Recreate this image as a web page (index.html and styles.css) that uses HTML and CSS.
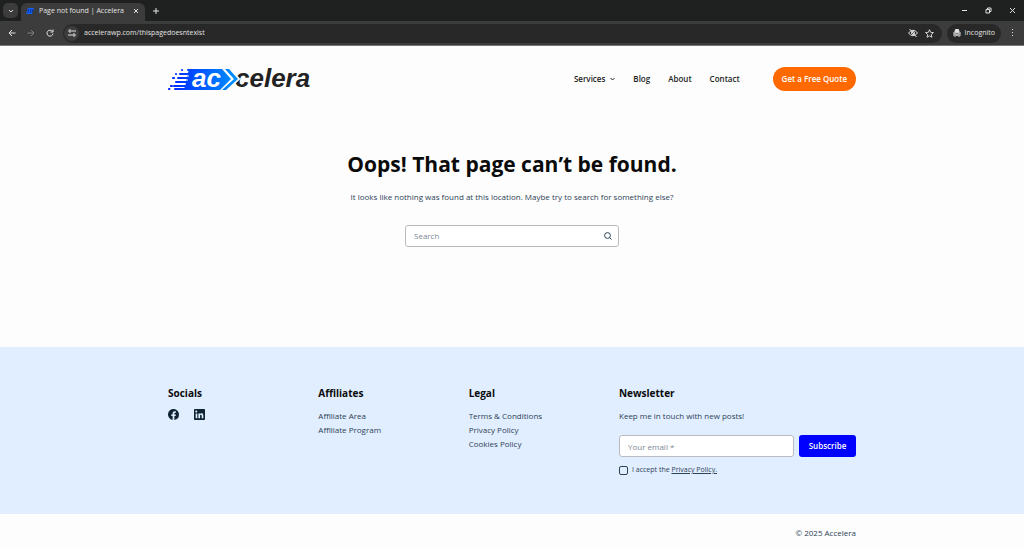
FILE: index.html
```html
<!DOCTYPE html>
<html lang="en">
<head>
    <meta charset="UTF-8">
    <title>Page not found | Accelera</title>
    <link rel="stylesheet" href="styles.css">
</head>
<body>
    <!-- browser -->
    <div class="browser">
        <div class="tabs">
            <button class="tab-list" aria-label="Search tabs">
                <svg width="6" height="6" viewBox="0 0 6 6"><path d="M1 2l2 2 2-2"/></svg>
            </button>
            <div class="tab">
                <svg class="favicon" width="8" height="6" viewBox="0 0 8 6"><path d="M2 0h6L6 6H0z" fill="#1463ff"/><path d="M3 1L1.500 5M5 1L4 5M7 1L6 5" stroke="#10308c"/></svg>
                <span class="tab-title">Page not found | Accelera</span>
                <button class="icon" aria-label="Close tab">
                    <svg width="6" height="6" viewBox="0 0 6 6"><path d="M1 1l4 4M5 1L1 5"/></svg>
                </button>
            </div>
            <button class="icon new-tab" aria-label="New tab">
                <svg width="8" height="8" viewBox="0 0 8 8"><path d="M4 1v6M1 4h6"/></svg>
            </button>
            <div class="window-btns">
                <button class="icon" aria-label="Minimize"><svg width="7" height="7" viewBox="0 0 7 7"><path d="M1 3.500h5"/></svg></button>
                <button class="icon" aria-label="Restore"><svg width="7" height="7" viewBox="0 0 7 7"><path d="M1 2.500h3.500V6H1zM2.500 2.500V1H6v3.500H4.500"/></svg></button>
                <button class="icon" aria-label="Close"><svg width="7" height="7" viewBox="0 0 7 7"><path d="M1 1l5 5M6 1L1 6"/></svg></button>
            </div>
        </div>
        <div class="toolbar">
            <button class="icon" aria-label="Back"><svg width="8" height="8" viewBox="0 0 8 8"><path d="M7.500 4H1M4 1L1 4l3 3"/></svg></button>
            <button class="icon off" aria-label="Forward"><svg width="8" height="8" viewBox="0 0 8 8"><path d="M.5 4H7M4 1l3 3-3 3"/></svg></button>
            <button class="icon" aria-label="Reload"><svg width="8" height="8" viewBox="0 0 8 8"><path d="M6.500 2.500A3 3 0 1 0 7 4.500M7 .5v2.500H4.500"/></svg></button>
            <div class="address">
                <button class="site-info" aria-label="Site information"><svg width="8" height="8" viewBox="0 0 8 8"><path d="M4 2h4M0 6h4"/><circle cx="2" cy="2" r="1.200"/><circle cx="6" cy="6" r="1.200"/></svg></button>
                <input class="url" type="text" aria-label="Address" value="accelerawp.com/thispagedoesntexist">
                <button class="icon" aria-label="Tracking protection"><svg width="10" height="10" viewBox="0 0 10 10"><path d="M.5 5Q5-.5 9.500 5 5 10.500.5 5zM1.500 1l7 8"/><circle cx="5" cy="5" r="1.500"/></svg></button>
                <button class="icon" aria-label="Bookmark"><svg width="9" height="9" viewBox="0 0 10 10"><path d="M5 .8l1.300 2.900 3.100.3L7 6.100l.7 3.100L5 7.600 2.300 9.200 3 6.100.6 4l3.100-.3z"/></svg></button>
            </div>
            <button class="incognito">
                <svg width="8" height="8" viewBox="0 0 8 8"><path d="M2.500.5h3l.7 2.700h-4.400z" fill="#e3e3e3"/><path d="M0 4h8M3 6h2"/><circle cx="2" cy="6" r="1.200"/><circle cx="6" cy="6" r="1.200"/></svg>
                Incognito
            </button>
            <button class="icon" aria-label="Menu"><svg class="dots" width="4" height="8" viewBox="0 0 4 8"><path d="M1 0h1v1H1zM1 3h1v1H1zM1 6h1v1H1z"/></svg></button>
        </div>
    </div>

    <header class="container header">
        <a href="#" class="logo" aria-label="Accelera">
            <svg width="146" height="34" viewBox="0 -4 146 34">
                <defs>
                    <linearGradient id="blue" gradientUnits="userSpaceOnUse" x1="0" y1="0" x2="70" y2="0">
                        <stop offset="0" stop-color="#0020ff"/>
                        <stop offset=".4" stop-color="#0050ff"/>
                        <stop offset="1" stop-color="#0094ff"/>
                    </linearGradient>
                </defs>
                <text x="67" y="21" class="logo-dark">celera</text>
                <path d="M54 3h8l9 10-12 11h-8z" fill="#fdfdfd" stroke="#fdfdfd" stroke-width="2"/>
                <path d="M21 3h33l9 10-11 11H16l2-9z" fill="url(#blue)"/>
                <path d="M57 3h4l9 10-12 11h-4l12-11z" fill="url(#blue)"/>
                <g stroke="url(#blue)" stroke-width="2" stroke-linecap="round">
                    <path d="M20 4h5M12 8.100l12-.1M10 12.100l12-.1M8 16.100l12-.1M6 20.100l12-.1M7 23.100l12-.1"/>
                    <path d="M14 4l.1.100M8 8l.1.100M5 12l1 .1M4 20l-1 .1M1 23l.5.100"/>
                </g>
                <path d="M13 10h8M11 14h9M10 18h8" stroke="#fdfdfd"/>
                <text x="24" y="21" class="logo-light">ac</text>
            </svg>
        </a>
        <nav class="nav">
            <a href="#">Services <svg width="5" height="4" viewBox="0 0 5 4"><path d="M.5 1l2 2 2-2"/></svg></a>
            <a href="#">Blog</a>
            <a href="#">About</a>
            <a href="#">Contact</a>
        </nav>
        <a href="#" class="quote">Get a Free Quote</a>
    </header>

    <main class="not-found">
        <h1>Oops! That page can’t be found.</h1>
        <p>It looks like nothing was found at this location. Maybe try to search for something else?</p>
        <form class="search">
            <input type="search" placeholder="Search" aria-label="Search">
            <button aria-label="Search"><svg width="8" height="8" viewBox="0 0 8 8"><circle cx="3.500" cy="3.500" r="2.900"/><path d="M5.500 5.500l2 2"/></svg></button>
        </form>
    </main>

    <footer>
        <div class="widgets">
            <div class="container columns">
                <section>
                    <h2>Socials</h2>
                    <div class="socials">
                        <a href="#" aria-label="Facebook"><svg width="11" height="11" viewBox="0 0 20 20"><path d="M20 10A10 10 0 1 0 8.400 19.900v-7H5.900V10h2.500V7.800c0-2.500 1.500-3.900 3.800-3.900l2.200.2v2.500h-1.200c-1.300 0-1.600.8-1.600 1.600V10h2.700l-.4 2.900h-2.300v7A10 10 0 0 0 20 10z"/></svg></a>
                        <a href="#" aria-label="LinkedIn"><svg width="11" height="11" viewBox="0 0 20 20"><path d="M18.500 0h-17A1.500 1.500 0 0 0 0 1.500v17A1.500 1.500 0 0 0 1.500 20h17a1.500 1.500 0 0 0 1.500-1.500v-17A1.500 1.500 0 0 0 18.500 0zM6 17H3V8h3zM4.500 6.300a1.800 1.800 0 1 1 0-3.500 1.800 1.800 0 0 1 0 3.500zM17 17h-3v-4.700c0-1.400-.6-1.900-1.400-1.900s-1.600.6-1.600 2V17H8V8h2.900v1.300c.3-.6 1.300-1.600 2.900-1.600 1.700 0 3.200 1 3.200 4z"/></svg></a>
                    </div>
                </section>
                <section>
                    <h2>Affiliates</h2>
                    <ul>
                        <li><a href="#">Affiliate Area</a></li>
                        <li><a href="#">Affiliate Program</a></li>
                    </ul>
                </section>
                <section>
                    <h2>Legal</h2>
                    <ul>
                        <li><a href="#">Terms &amp; Conditions</a></li>
                        <li><a href="#">Privacy Policy</a></li>
                        <li><a href="#">Cookies Policy</a></li>
                    </ul>
                </section>
                <section>
                    <h2>Newsletter</h2>
                    <p>Keep me in touch with new posts!</p>
                    <form>
                        <div class="subscribe">
                            <input type="email" placeholder="Your email *" aria-label="Your email">
                            <button>Subscribe</button>
                        </div>
                        <div class="accept">
                            <input type="checkbox" id="accept">
                            <label for="accept">I accept the <a href="#">Privacy Policy.</a></label>
                        </div>
                    </form>
                </section>
            </div>
        </div>
        <div class="container copyright">© 2025 Accelera</div>
    </footer>
</body>
</html>
```
FILE: styles.css
```css
*{
    box-sizing: border-box;
}
body{
    margin: 0;
    font: 8px/14px "Open Sans", "Noto Sans", sans-serif;
    color: #2c4256;
    background-color: #fdfdfd;
}
h1,h2,p,ul{
    margin: 0;
    padding: 0;
}
ul{
    list-style-type: none;
}
a{
    text-decoration: none;
    color: inherit;
}
button,input{
    margin: 0;
    padding: 0;
    border: none;
    background: none;
    font: inherit;
    color: inherit;
    outline: none;
}
svg{
    display: block;
}
.container{
    max-width: 688px;
    margin: 0 auto;
}

/* browser */
.browser{
    background-color: #3c3c3c;
    color: #e3e3e3;
    font: 7px/12px "Open Sans", sans-serif;
    border-bottom: 1px solid #777777;
}
.browser svg{
    fill: none;
    stroke: #e3e3e3;
}
.browser .favicon{
    stroke: none;
}
.browser .dots{
    fill: #e3e3e3;
    stroke: none;
}
.tabs{
    display: flex;
    align-items: center;
    height: 21px;
    padding: 0 6px 0 3px;
    background-color: #1f2120;
}
.icon{
    display: flex;
    align-items: center;
    justify-content: center;
    width: 12px;
    height: 12px;
}
.off{
    opacity: .4;
}
.tab-list{
    display: flex;
    align-items: center;
    justify-content: center;
    width: 15px;
    height: 15px;
    border-radius: 5px;
    background-color: #3c3c3c;
}
.tab{
    display: flex;
    align-items: center;
    gap: 5px;
    width: 124px;
    height: 18px;
    margin: 3px 5px 0 3px;
    padding: 0 3px 2px 5px;
    border-radius: 6px 6px 0 0;
    background-color: #3c3c3c;
}
.tab-title{
    flex: 1;
    white-space: nowrap;
}
.window-btns{
    display: flex;
    gap: 12px;
    margin-left: auto;
}
.toolbar{
    display: flex;
    align-items: center;
    gap: 7px;
    height: 24px;
    padding: 0 5px 0 6px;
}
.address{
    display: flex;
    align-items: center;
    gap: 5px;
    flex: 1;
    height: 19px;
    margin-right: -2px;
    padding: 0 6px 0 1px;
    border-radius: 10px;
    background-color: #282828;
}
.site-info{
    display: flex;
    align-items: center;
    justify-content: center;
    width: 15px;
    height: 15px;
    border-radius: 50%;
    background-color: #3c3c3c;
}
.url{
    flex: 1;
}
.incognito{
    display: flex;
    align-items: center;
    gap: 4px;
    height: 19px;
    margin-right: -1px;
    padding: 0 6px;
    border-radius: 10px;
    background-color: #282828;
}

/* header */
.header{
    display: flex;
    align-items: center;
    height: 66px;
}
.logo-dark,.logo-light{
    font: italic bold 26px "Liberation Sans", sans-serif;
    fill: #222222;
}
.logo-light{
    fill: #ffffff;
}
.nav{
    display: flex;
    gap: 18px;
    margin-left: auto;
    font-weight: 600;
    color: #222222;
}
.nav a{
    display: flex;
    align-items: center;
    gap: 5px;
}
.nav svg{
    fill: none;
    stroke: #222222;
}
.quote{
    margin-left: 33px;
    padding: 5px 9px;
    border-radius: 12px;
    background-color: #ff6900;
    font-weight: 600;
    color: #ffffff;
}

/* 404 */
.not-found{
    display: flex;
    flex-direction: column;
    align-items: center;
    min-height: 235px;
    padding-top: 36px;
}
.not-found h1{
    font-size: 21px;
    line-height: 32px;
    color: #0a0a0a;
}
.not-found p{
    margin: 10px 0 21px;
}
.search{
    display: flex;
    align-items: center;
    width: 214px;
    height: 22px;
    padding: 0 6px 0 8px;
    border: 1px solid #b8bcc0;
    border-radius: 3px;
    background-color: #ffffff;
}
.search input{
    flex: 1;
}
.search svg{
    fill: none;
    stroke: #2c4256;
}
::placeholder{
    color: #7b8794;
    opacity: 1;
}

/* footer */
.widgets{
    padding: 39px 0 37px;
    background-color: #e1eeff;
}
.columns{
    display: grid;
    grid-template-columns: 1fr 1fr 1fr 237px;
}
.columns h2{
    margin-bottom: 9px;
    font-size: 10px;
    line-height: 14px;
    color: #0a0a0a;
}
.socials{
    display: flex;
    gap: 15px;
    fill: #0e2333;
}
.subscribe{
    display: flex;
    gap: 5px;
    margin: 12px 0 6px;
}
.subscribe input{
    flex: 1;
    min-width: 0;
    height: 22px;
    padding: 0 8px;
    border: 1px solid #b8bcc0;
    border-radius: 3px;
    background-color: #ffffff;
}
.subscribe button{
    width: 57px;
    border-radius: 3px;
    background-color: #0000ff;
    font-weight: 600;
    color: #ffffff;
}
.accept{
    display: flex;
    align-items: center;
    gap: 4px;
    font-size: 7px;
}
.accept input{
    appearance: none;
    width: 9px;
    height: 9px;
    border: 1px solid #2c4256;
    border-radius: 2px;
}
.accept a{
    text-decoration: underline;
}
.copyright{
    padding: 12px 0 8px;
    text-align: right;
}
```
